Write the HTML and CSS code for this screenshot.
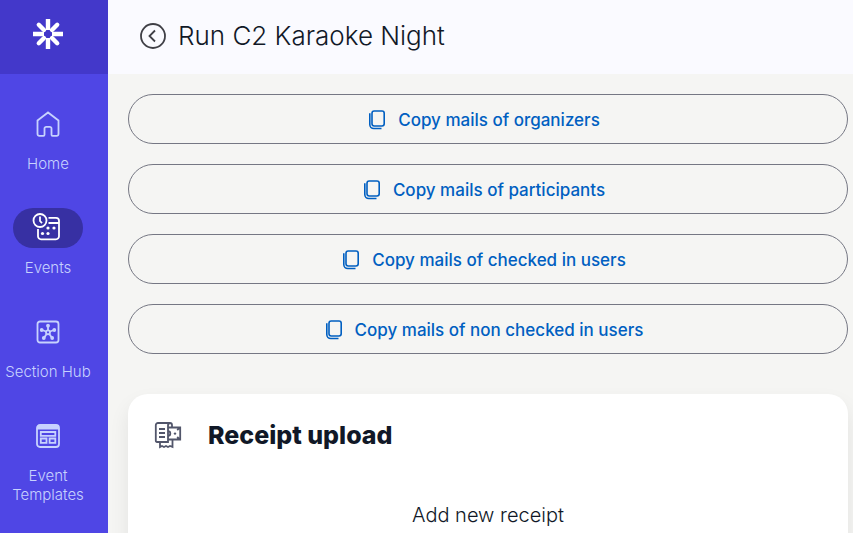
FILE: index.html
```html
<!DOCTYPE html>
<html lang="en">
<head>
	<meta charset="utf-8">
	<meta name="viewport" content="width=device-width, initial-scale=1">
	<title>Run C2 Karaoke Night</title>
	<link rel="stylesheet" href="styles.css">
</head>
<body>
	<svg class="sprite" aria-hidden="true">
		<symbol id="icon-copy" viewBox="0 0 16 20">
			<rect x="3" y="1" width="12.200" height="15" rx="2.200"/>
			<path d="M.8 3.300v11.200a4 4 0 0 0 4 4h7.700"/>
		</symbol>
	</svg>

	<div class="app">
		<nav class="sidebar">
			<a class="logo" href="#" aria-label="Start page">
				<svg width="30" height="30" viewBox="0 0 30 30">
					<path d="M15 0v11M15 19v11M0 15h11M19 15h11" stroke-width="4.400"/>
					<path d="M5.800 5.800l5.200 5.200M19 19l5.200 5.200M24.200 5.800L19 11M11 19l-5.200 5.200" stroke-width="4.400" stroke-linecap="round"/>
					<circle class="logo-hole" cx="15" cy="15" r="3"/>
				</svg>
			</a>
			<ul class="menu">
				<li>
					<a class="menu-link" href="#">
						<span class="menu-icon">
							<svg width="24" height="26" viewBox="0 0 24 26">
								<path d="M1.500 9.500L12 1.500l10.500 8V23a1.800 1.800 0 0 1-1.800 1.800h-4.200a1 1 0 0 1-1-1v-6.300a1.700 1.700 0 0 0-1.700-1.700h-3.600a1.700 1.700 0 0 0-1.700 1.700v6.300a1 1 0 0 1-1 1H3.300A1.800 1.800 0 0 1 1.500 23z"/>
							</svg>
						</span>
						Home
					</a>
				</li>
				<li>
					<a class="menu-link active" href="#">
						<span class="menu-icon">
							<svg width="32" height="32" viewBox="0 0 32 32">
								<circle cx="8" cy="8.500" r="6.500"/>
								<path d="M8 4.500v4.500l2 2.200M16.500 5.800H24a3 3 0 0 1 3 3v15.500a3 3 0 0 1-3 3H9a3 3 0 0 1-3-3V17M16.500 11H27"/>
								<g class="dots">
									<circle cx="16" cy="16" r="1.600"/>
									<circle cx="22" cy="16" r="1.600"/>
									<circle cx="10.500" cy="21.500" r="1.600"/>
									<circle cx="16" cy="21.500" r="1.600"/>
								</g>
							</svg>
						</span>
						Events
					</a>
				</li>
				<li>
					<a class="menu-link" href="#">
						<span class="menu-icon">
							<svg width="24" height="24" viewBox="0 0 24 24">
								<rect x="1.500" y="1.500" width="21" height="21" rx="2.500"/>
								<path d="M12 10V6M14 11.500l4-1.500M13.400 14l2.600 4M10.600 14L8 18M10 11.500L6 10"/>
								<circle cx="12" cy="12.300" r="2"/>
								<g class="dots">
									<circle cx="12" cy="5.700" r="1.900"/>
									<circle cx="18.300" cy="10" r="1.900"/>
									<circle cx="16.200" cy="18" r="1.900"/>
									<circle cx="7.800" cy="18" r="1.900"/>
									<circle cx="5.700" cy="10" r="1.900"/>
								</g>
							</svg>
						</span>
						Section Hub
					</a>
				</li>
				<li>
					<a class="menu-link" href="#">
						<span class="menu-icon">
							<svg width="24" height="24" viewBox="0 0 24 24">
								<rect x="1" y="1" width="22" height="22" rx="3"/>
								<path class="dots" d="M1 5.500V4a3 3 0 0 1 3-3h16a3 3 0 0 1 3 3v1.500z"/>
								<path d="M4.800 8h14.500v3.800H4.800zM4.800 14.500h5.700v4.300H4.800zM13.600 14.500h5.700v4.300h-5.700z"/>
							</svg>
						</span>
						Event Templates
					</a>
				</li>
			</ul>
		</nav>

		<div class="page">
			<header class="topbar">
				<button class="back" type="button" aria-label="Back">
					<svg width="26" height="26" viewBox="0 0 26 26">
						<circle cx="13" cy="13" r="12"/>
						<path d="M15 7.500L9.500 13l5.500 5.500"/>
					</svg>
				</button>
				<h1 class="title">Run C2 Karaoke Night</h1>
			</header>

			<main class="content">
				<div class="actions">
					<button class="copy-btn" type="button"><svg class="copy-icon"><use href="#icon-copy"/></svg>Copy mails of organizers</button>
					<button class="copy-btn" type="button"><svg class="copy-icon"><use href="#icon-copy"/></svg>Copy mails of participants</button>
					<button class="copy-btn" type="button"><svg class="copy-icon"><use href="#icon-copy"/></svg>Copy mails of checked in users</button>
					<button class="copy-btn" type="button"><svg class="copy-icon"><use href="#icon-copy"/></svg>Copy mails of non checked in users</button>
				</div>

				<section class="card">
					<div class="card-head">
						<svg class="receipt-icon" width="28" height="28" viewBox="0 0 28 28">
							<path d="M4 2h12a2 2 0 0 1 2 2v3M3 21h11V4.500A2.500 2.500 0 0 1 16 2H4a2.200 2.200 0 0 0-2.200 2.200v15.500A1.200 1.200 0 0 0 3 21zM5 8h6M5 12h6M5 16h6"/>
							<path d="M14 6.500h12.200v12H14M6 21v5l2-1 2 1 2-1 2 1 2-1 2.500 1v-7.500M14 10.200a2.300 2.300 0 1 1 0 4.600M23.200 9.200l2.500-2.500M23.200 16l2.500 2.500"/>
							<circle class="dots" cx="21" cy="12.600" r="1.200"/>
						</svg>
						<h2 class="card-title">Receipt upload</h2>
					</div>
					<p class="card-text">Add new receipt</p>
				</section>
			</main>
		</div>
	</div>
</body>
</html>
```
FILE: styles.css
```css
*{
	box-sizing: border-box;
	margin: 0;
	padding: 0;
}
body{
	font-family: Inter, "Liberation Sans", sans-serif;
	color: #111827;
	background-color: #f5f5f3;
}
svg{
	display: block;
	fill: none;
	stroke: currentColor;
	stroke-width: 1.6;
	flex-shrink: 0;
}
.sprite{
	display: none;
}
.dots{
	fill: currentColor;
	stroke: none;
}
button{
	font: inherit;
	background: none;
	border: 0;
	cursor: pointer;
}
.app{
	display: flex;
	height: 100vh;
	overflow: hidden;
}

/* sidebar */
.sidebar{
	width: 108px;
	flex-shrink: 0;
	background-color: #4f46e5;
}
.logo{
	display: flex;
	height: 74px;
	padding: 19px 33px;
	color: #fff;
	background-color: #4338ca;
}
.logo-hole{
	fill: #4338ca;
	stroke: none;
}
.menu{
	display: flex;
	flex-direction: column;
	gap: 35px;
	width: 96px;
	padding-top: 30px;
	list-style: none;
}
.menu-link{
	display: flex;
	flex-direction: column;
	align-items: center;
	gap: 10px;
	font-size: 15px;
	font-weight: 300;
	line-height: 19px;
	text-align: center;
	text-decoration: none;
	color: #c7d2fe;
}
.menu-icon{
	display: flex;
	align-items: center;
	justify-content: center;
	width: 70px;
	height: 40px;
	border-radius: 20px;
}
.menu svg{
	stroke-width: 1.8;
}
.active .menu-icon{
	color: #fff;
	background-color: #3730a3;
}

/* header */
.page{
	flex: 1;
	min-width: 0;
}
.topbar{
	display: flex;
	align-items: center;
	gap: 12px;
	height: 74px;
	padding: 0 32px 2px;
	background-color: #fafaff;
}
.back{
	color: #3f3f46;
}
.back svg{
	stroke-width: 1.8;
}
.title{
	font-size: 26px;
	font-weight: 300;
	line-height: 36px;
}

/* content */
.content{
	padding: 20px 5px 0 20px;
}
.actions{
	display: flex;
	flex-direction: column;
	gap: 20px;
}
.copy-btn{
	display: flex;
	align-items: center;
	justify-content: center;
	gap: 13px;
	height: 50px;
	padding: 1px 7px 0 0;
	border: 1px solid #757783;
	border-radius: 25px;
	font-size: 17px;
	font-weight: 500;
	color: #005fc1;
}
.copy-icon{
	width: 16px;
	height: 20px;
}
.card{
	margin-top: 40px;
	padding: 24px 26px;
	min-height: 240px;
	border-radius: 20px;
	background-color: #fff;
	box-shadow: 0 10px 20px rgba(0, 0, 0, .08);
}
.card-head{
	display: flex;
	align-items: center;
	gap: 26px;
}
.receipt-icon{
	color: #52566b;
	stroke-width: 1.8;
}
.card-title{
	font-size: 25px;
	font-weight: 800;
	line-height: 34px;
}
.card-text{
	margin-top: 48px;
	font-size: 20px;
	font-weight: 300;
	line-height: 30px;
	text-align: center;
}
```
